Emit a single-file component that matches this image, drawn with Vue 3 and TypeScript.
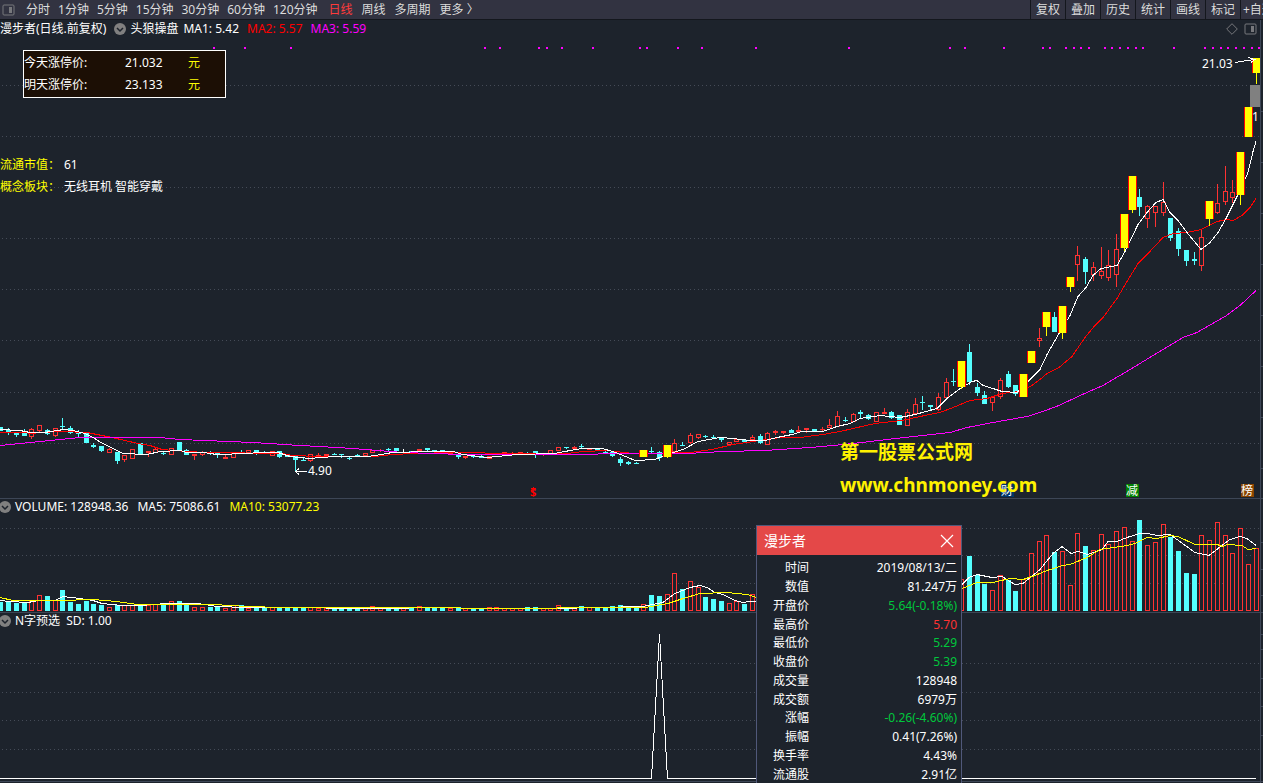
<script setup lang="ts">
import { ref } from 'vue'

type Kind = 'c' | 'r' | 'y' | 'w'
interface Candle { left: number; kind: Kind; high: number; top: number; bottom: number; low: number }
interface Volume { left: number; kind: string; top: number }
interface Row { name: string; value: string; tone: string }

const minutePeriods = ['分时', '1分钟', '5分钟', '15分钟', '30分钟', '60分钟', '120分钟']
const longPeriods = ['日线', '周线', '多周期', '更多 〉']
const tools = ['复权', '叠加', '历史', '统计', '画线', '标记', '+自选']
const active = ref('日线')
const popupOpen = ref(true)

const barLeft = (i: number): number => (i === 0 ? -2 : Math.floor(6.6 + 7.7485 * (i - 1)))

// Each entry: kind high top bottom low
const candleSource = `c 427 427 431 431,c 428 430 432 435,c 432 432 435 437,c 429 432 436 436,r 428 429 437 439,r 425 425 431 432,c 429 430 434 435,r 428 428 436 437,c 418 426 427 429,c 426 428 433 434,
c 430 433 434 437,c 432 433 443 443,c 443 445 447 448,c 446 446 451 452,r 448 449 453 453,c 452 452 461 464,r 455 455 460 462,r 449 449 459 459,c 443 443 454 454,r 451 451 453 457,
r 447 449 453 453,c 451 453 454 455,r 448 448 455 455,c 442 442 450 450,c 449 450 455 455,r 454 454 456 460,r 451 452 455 456,c 451 452 453 455,c 453 453 454 458,r 455 457 459 459,
r 453 453 458 458,c 450 452 453 454,r 450 450 453 453,c 450 450 453 455,c 451 452 453 453,r 451 451 456 456,c 451 451 457 458,c 454 454 457 457,c 456 456 460 472,c 458 460 461 461,
r 454 454 461 462,r 453 455 456 456,r 454 454 456 456,c 453 454 455 455,c 454 454 455 458,c 457 458 459 460,c 454 455 456 456,r 453 453 456 457,r 450 450 453 453,r 449 450 451 452,
c 448 449 450 452,c 448 448 451 453,w 449 452 453 453,c 451 451 453 454,r 449 449 451 451,c 448 448 450 451,c 450 450 452 452,c 450 450 452 452,r 453 453 455 455,c 454 454 457 459,
r 456 456 458 459,c 456 456 457 458,c 454 456 458 458,r 456 456 459 459,r 453 453 454 454,r 452 452 455 455,r 452 453 454 454,r 452 452 453 453,c 452 453 454 454,c 451 451 454 458,
r 454 454 455 456,r 450 450 454 454,r 447 447 451 451,c 447 447 448 449,r 446 447 449 449,c 444 446 447 448,r 449 449 450 450,c 449 449 450 450,c 451 452 453 453,c 452 452 456 457,
c 457 459 463 466,c 461 462 464 465,c 462 463 464 464,y 450 450 457 457,c 447 451 452 454,c 451 452 458 461,y 445 445 457 458,r 439 443 452 452,c 442 445 446 446,r 433 435 443 444,
r 434 434 438 439,c 435 436 437 438,c 435 437 438 439,c 438 438 440 442,r 442 442 445 445,r 438 439 442 442,c 439 440 442 442,r 435 437 440 440,c 434 436 443 444,r 432 433 445 445,
r 430 431 433 435,r 431 431 433 434,c 429 430 433 433,r 426 430 432 432,r 428 428 430 433,c 429 429 431 431,r 427 429 430 431,r 419 425 428 428,r 411 416 427 427,c 417 420 421 422,
r 413 414 422 422,c 410 412 414 418,c 414 415 419 420,r 412 412 422 422,r 408 412 414 414,c 411 412 418 419,c 415 415 425 425,r 409 412 426 426,r 398 404 414 414,c 396 402 403 410,
c 405 405 407 411,r 393 397 410 411,r 378 382 398 400,c 369 381 382 386,y 361 361 387 389,c 344 352 382 385,c 383 387 393 396,c 391 395 404 404,r 396 397 403 411,r 378 380 397 399,
c 371 374 387 388,c 385 385 394 396,y 374 374 397 397,y 351 351 363 363,r 328 338 341 347,y 312 312 327 336,c 312 317 332 332,y 306 306 333 339,y 277 277 287 292,r 246 255 265 281,
c 257 259 272 284,r 262 267 275 281,r 247 271 276 279,r 250 265 278 281,r 234 249 275 287,y 214 214 248 251,y 176 176 210 213,c 189 197 207 216,r 205 206 219 228,r 206 206 213 227,
r 182 202 213 216,c 218 218 238 241,c 228 231 249 256,c 250 250 261 266,c 252 259 261 265,r 230 237 266 271,y 201 201 219 226,r 184 203 213 214,r 166 191 202 205,r 180 192 198 203,
y 152 152 195 205,y 107 107 137 137,y 58 58 73 84`

const candles: Candle[] = candleSource.split(',').map((entry, i) => {
  const [kind, high, top, bottom, low] = entry.trim().split(' ')
  return { left: barLeft(i), kind: kind as Kind, high: +high, top: +top, bottom: +bottom, low: +low }
})

const volumeHead = `c602 c602 c603 c603 r601 r595 c596 r600 c590 c602 c604 c601 c604 c605 r607 c605 r605 r605 c605 r605 r604 c603 r601 c601 c604 r607 r607 c607 c606 r608
r605 c605 r608 c607 c607 r607 c607 c607 c607 c608 r607 r608 r608 c608 c608 c608 c608 r608 r606 r607 c607 c607 r607 c607 r606 c607 c607 c607 r608 c607
r608 c608 c608 r607 r607 r608 r608 r608 c607 c607 r608 r608 r605 c607 r607 c606 r607 c607 c607 c606 c605 c607 c607 r604 c595 c596 r594 r573 c589 r581
r587 c597 c599 c601 r603 r601 c604 r594`
const volumeTail = `r579 c556 c575 c584 r590 r575 c580 c591 r579 r553 r541 r535 c552 r551 r585 r533 c546 r550 r534 r544 r531 r527 r541 c520 r545 r542 r524 c537 c551
c573 c574 r535 r540 r522 r535 r553 r528 r564 r548`
const readVolumes = (source: string, first: number): Volume[] =>
  source.split(/\s+/).map((v, i) => ({ left: barLeft(i + first), kind: v[0], top: +v.slice(1) }))
const volumes = [...readVolumes(volumeHead, 0), ...readVolumes(volumeTail, 124)]

const ma1 = '0,429 20,430 30,432 44,432 58,430 63,429 73,430 85,433 93,437 101,442 113,448 123,453 147,454 160,451 180,450 187,452 203,452 217,454 247,453 260,452 278,452 290,456 310,458 320,457 337,456 347,456 367,456 382,454 392,452 430,451 453,451 463,454 487,457 507,455 517,454 555,453 570,450 582,448 602,448 613,451 623,455 635,460 655,459 667,454 683,449 698,441 720,437 733,438 750,440 765,440 777,437 792,434 802,431 823,431 837,426 850,423 860,418 880,415 900,417 915,414 937,408 947,398 960,388 972,381 977,380 983,385 993,388 1002,391 1017,392 1028,381 1040,369 1047,354 1055,340 1062,328 1070,315 1078,296 1086,287 1093,275 1101,268 1117,265 1125,251 1138,224 1147,212 1156,202 1163,199 1170,212 1178,220 1187,232 1201,249 1210,242 1218,232 1226,218 1237,196 1248,172 1253,151 1256,141'
const ma2 = '0,432 23,432 33,433 38,432 63,431 87,432 112,437 138,443 150,445 162,449 187,451 207,452 282,453 293,455 319,456 353,456 375,456 392,454 415,453 453,452 477,452 493,453 567,453 583,451 607,450 633,453 653,453 690,452 712,449 733,444 753,441 767,439 780,437 800,437 823,434 840,431 853,428 875,423 902,420 920,416 940,412 953,407 970,400 987,398 1002,393 1020,391 1032,385 1040,379 1047,373 1059,367 1072,356 1085,337 1094,326 1103,317 1117,298 1127,281 1138,263 1148,253 1163,237 1173,233 1187,232 1201,229 1217,221 1227,219 1233,220 1242,215 1250,207 1256,198'
const ma3 = '0,445 20,443 50,440 80,437 160,437 180,439 253,442 300,445 319,446 353,448 403,452 463,454 567,454 630,453 687,453 723,451 765,450 810,447 833,445 853,443 887,439 923,435 950,432 967,427 993,422 1027,416 1040,412 1059,405 1080,395 1103,385 1130,369 1163,349 1183,337 1197,332 1225,316 1240,305 1256,290'
const volMa5 = '0,600 10,601 28,602 38,600 55,600 63,596 80,598 93,600 102,603 122,605 140,605 167,603 198,603 217,606 247,607 319,607 332,608 370,608 450,607 470,608 555,608 643,606 663,602 675,593 690,587 700,585 707,587 715,592 723,594 735,600 743,602 750,601 757,601 950,592 962,584 969,577 977,574 992,577 1002,576 1015,584 1023,583 1040,569 1053,553 1062,546 1071,553 1078,551 1088,554 1102,549 1108,541 1117,541 1127,537 1140,533 1148,533 1157,535 1170,534 1177,539 1195,552 1209,555 1218,548 1230,539 1240,536 1247,538 1256,545'
const volMa10 = '0,597 13,600 60,600 93,599 117,601 137,604 213,604 247,606 283,607 450,607 470,608 555,608 560,607 645,607 668,603 683,598 700,593 727,592 747,594 757,597 962,588 977,582 993,582 1010,578 1023,579 1035,575 1047,570 1063,565 1070,564 1087,557 1100,549 1127,545 1135,543 1147,537 1157,538 1170,535 1178,536 1195,544 1217,544 1223,546 1227,544 1242,545 1248,549 1256,548'

const signalDots = [213, 244, 290, 484, 499, 538, 546, 561, 592, 639, 646, 677, 701, 755, 848, 949, 964, 1003, 1042, 1049, 1065, 1073, 1080, 1088, 1104, 1111, 1119, 1127, 1135, 1142, 1173, 1204, 1212, 1220, 1227, 1235, 1243, 1251, 1258]
const priceGrid = [85, 136, 187, 238, 289, 340, 392, 443]
const priceTicks = [111, 162, 213, 264, 315, 366, 417, 468]
const volumeGrid = [528, 555, 583]
const volumeTicks = [542, 569, 595]
const signalGrid = [663, 692, 720, 749]
const signalTicks = [634, 649, 678, 706, 735]

// Marks placed on the price canvas, in chart coordinates
const marks = [
  { text: '21.03', x: 1202, y: 56, tone: 'plain' },
  { text: '4.90', x: 308, y: 463, tone: 'plain' },
  { text: '1', x: 1252, y: 109, tone: 'plain' },
  { text: '财', x: 1001, y: 484, tone: 'navy' },
  { text: '减', x: 1126, y: 484, tone: 'green' },
  { text: '榜', x: 1241, y: 484, tone: 'brown' },
  { text: '$', x: 530, y: 486, tone: 'dollar' },
  { text: '第一股票公式网', x: 840, y: 441, tone: 'brand' },
  { text: 'www.chnmoney.com', x: 840, y: 474, tone: 'brand' },
]
const place = (x: number, y: number) => ({ left: `${(x / 1263) * 100}%`, top: `${((y - 20) / 479) * 100}%` })

const rows: Row[] = [
  { name: '时间', value: '2019/08/13/二', tone: '' },
  { name: '数值', value: '81.247万', tone: '' },
  { name: '开盘价', value: '5.64(-0.18%)', tone: 'down' },
  { name: '最高价', value: '5.70', tone: 'up' },
  { name: '最低价', value: '5.29', tone: 'down' },
  { name: '收盘价', value: '5.39', tone: 'down' },
  { name: '成交量', value: '128948', tone: '' },
  { name: '成交额', value: '6979万', tone: '' },
  { name: '涨幅', value: '-0.26(-4.60%)', tone: 'down' },
  { name: '振幅', value: '0.41(7.26%)', tone: '' },
  { name: '换手率', value: '4.43%', tone: '' },
  { name: '流通股', value: '2.91亿', tone: '' },
]
</script>

<template>
  <div class="app">
    <header class="toolbar">
      <button class="side" aria-label="侧栏">
        <svg width="13" height="12" viewBox="0 0 13 12"><rect x="1" y="1" width="11" height="10" rx="1" fill="none" stroke="#77787c" /><rect x="7" y="3" width="3" height="6" fill="#77787c" /></svg>
      </button>
      <nav class="minutes">
        <button v-for="p in minutePeriods" :key="p" :class="{ on: active === p }" @click="active = p">{{ p }}</button>
      </nav>
      <nav class="longer">
        <button v-for="p in longPeriods" :key="p" :class="{ on: active === p }" @click="active = p">{{ p }}</button>
      </nav>
      <div class="tools">
        <button v-for="t in tools" :key="t">{{ t }}</button>
      </div>
    </header>

    <section class="panel price">
      <svg class="plot" viewBox="0 20 1263 479" preserveAspectRatio="none" shape-rendering="crispEdges">
        <line v-for="y in priceGrid" :key="y" class="grid" x1="2" x2="1263" :y1="y + 0.5" :y2="y + 0.5" />
        <rect v-for="x in signalDots" :key="x" class="signal" :x="x" y="47" width="2" height="2" />
        <g v-for="(k, i) in candles" :key="i" :class="k.kind">
          <template v-if="k.kind !== 'y'">
            <rect class="fill" :x="k.left + 2" :y="k.high" width="1" :height="k.top - k.high" />
            <rect class="fill" :x="k.left + 2" :y="k.bottom" width="1" :height="k.low - k.bottom" />
            <rect v-if="k.kind === 'r' && k.bottom - k.top > 2" class="outline" :x="k.left + 0.5" :y="k.top + 0.5" width="4" :height="k.bottom - k.top - 1" />
            <rect v-else class="fill" :x="k.left" :y="k.top" width="5" :height="k.bottom - k.top" />
          </template>
        </g>
        <polyline class="line red" :points="ma2" transform="translate(0 .5)" />
        <polyline class="line magenta" :points="ma3" transform="translate(0 .5)" />
        <polyline class="line white" :points="ma1" transform="translate(0 .5)" />
        <g v-for="(k, i) in candles" :key="`limit${i}`" class="y">
          <template v-if="k.kind === 'y'">
            <rect class="edge" :x="k.left - 2" :y="k.top" width="9" :height="k.bottom - k.top" />
            <rect class="fill" :x="k.left - 1" :y="k.top" width="7" :height="k.bottom - k.top" />
            <rect class="fill" :x="k.left + 2" :y="k.bottom" width="1" :height="k.low - k.bottom" />
          </template>
        </g>
        <rect class="block" x="1250" y="85" width="10" height="22" />
        <path class="line white" d="M1235 62.5L1254 59.5M1248 57.5L1255 59.5L1251 62.5M295 471.5H307M299 468.5L295.500 471.500L299 474.500" />
        <path class="line red" d="M531 488.500H536M533 486.500V488" />
        <rect class="margin" x="1260" y="20" width="3" height="479" />
        <path class="frame" d="M0 498.500H1263M1260.500 20V499" />
        <line v-for="y in priceTicks" :key="`t${y}`" class="frame" x1="1260" x2="1263" :y1="y + 0.5" :y2="y + 0.5" />
      </svg>
      <span v-for="m in marks" :key="m.text" :class="['mark', m.tone]" :style="place(m.x, m.y)">{{ m.text }}</span>
      <div class="overlay">
        <div class="caption">
          <span class="stock">漫步者(日线.前复权)</span>
          <button class="chevron" aria-label="切换指标">
            <svg width="12" height="12" viewBox="0 0 12 12"><circle cx="6" cy="6" r="6" fill="#808080" /><path d="M3 5L6 8L9 5" fill="none" stroke="#1d232c" stroke-width="1.500" /></svg>
          </button>
          <span class="formula">头狼操盘</span>
          <span class="ma">MA1: 5.42</span>
          <span class="ma text-red">MA2: 5.57</span>
          <span class="ma text-magenta">MA3: 5.59</span>
          <span class="corner">
            <button aria-label="标注"><svg width="12" height="12" viewBox="0 0 12 12"><path d="M6 .700L11.300 6L6 11.300L.700 6Z" fill="none" stroke="#77787c" /></svg></button>
            <button aria-label="右侧栏"><svg width="13" height="12" viewBox="0 0 13 12"><rect x="1" y="1" width="11" height="10" rx="1" fill="none" stroke="#77787c" /><rect x="7" y="3" width="3" height="6" fill="#77787c" /></svg></button>
          </span>
        </div>
        <div class="limits">
          <span>今天涨停价:</span><span>21.032</span><span class="text-yellow">元</span>
          <span>明天涨停价:</span><span>23.133</span><span class="text-yellow">元</span>
        </div>
        <div class="facts">
          <span class="text-yellow">流通市值：</span><span>61</span>
          <span class="text-yellow">概念板块：</span><span>无线耳机 智能穿戴</span>
        </div>
      </div>
    </section>

    <section class="panel volume">
      <svg class="plot" viewBox="0 499 1263 114" preserveAspectRatio="none" shape-rendering="crispEdges">
        <line v-for="y in volumeGrid" :key="y" class="grid" x1="2" x2="1260" :y1="y + 0.5" :y2="y + 0.5" />
        <g v-for="(v, i) in volumes" :key="i" :class="v.kind">
          <rect v-if="v.kind === 'r'" class="outline" :x="v.left + 0.5" :y="v.top + 0.5" width="4" :height="610 - v.top" />
          <rect v-else class="fill" :x="v.left" :y="v.top" width="5" :height="611 - v.top" />
        </g>
        <polyline class="line white" :points="volMa5" transform="translate(0 .5)" />
        <polyline class="line yellow" :points="volMa10" transform="translate(0 .5)" />
        <path class="frame" d="M0 612.500H1263M1260.500 499V613" />
        <line v-for="y in volumeTicks" :key="`t${y}`" class="frame" x1="1260" x2="1263" :y1="y + 0.5" :y2="y + 0.5" />
      </svg>
      <div class="overlay">
        <div class="caption low">
          <button class="chevron" aria-label="切换指标">
            <svg width="12" height="12" viewBox="0 0 12 12"><circle cx="6" cy="6" r="6" fill="#808080" /><path d="M3 5L6 8L9 5" fill="none" stroke="#1d232c" stroke-width="1.500" /></svg>
          </button>
          <span>VOLUME: 128948.36</span><span>MA5: 75086.61</span><span class="text-yellow">MA10: 53077.23</span>
        </div>
      </div>
    </section>

    <section class="panel signal-panel">
      <svg class="plot" viewBox="0 613 1263 170" preserveAspectRatio="none" shape-rendering="crispEdges">
        <line v-for="y in signalGrid" :key="y" class="grid" x1="2" x2="1260" :y1="y + 0.5" :y2="y + 0.5" />
        <polyline class="line white" points="0,778.5 651.5,778.5 659.5,634 667.5,778.5 1256,778.5" />
        <path class="frame" d="M0 781.500H1263M1260.500 613V783" />
        <line v-for="y in signalTicks" :key="`t${y}`" class="frame" x1="1260" x2="1263" :y1="y + 0.5" :y2="y + 0.5" />
      </svg>
      <div class="overlay">
        <div class="caption low">
          <button class="chevron" aria-label="切换指标">
            <svg width="12" height="12" viewBox="0 0 12 12"><circle cx="6" cy="6" r="6" fill="#808080" /><path d="M3 5L6 8L9 5" fill="none" stroke="#1d232c" stroke-width="1.500" /></svg>
          </button>
          <span>N字预选</span><span>SD: 1.00</span>
        </div>
      </div>
    </section>

    <aside v-if="popupOpen" class="popup">
      <div class="title">
        <span>漫步者</span>
        <button aria-label="关闭" @click="popupOpen = false">
          <svg width="14" height="14" viewBox="0 0 14 14"><path d="M1 1L13 13M13 1L1 13" stroke="#fff" stroke-width="1.200" fill="none" /></svg>
        </button>
      </div>
      <table>
        <tbody>
          <tr v-for="r in rows" :key="r.name"><th scope="row">{{ r.name }}</th><td :class="r.tone">{{ r.value }}</td></tr>
        </tbody>
      </table>
    </aside>
  </div>
</template>

<style>
body { margin: 0; background: #1d232c; }
</style>

<style scoped>
.app {
  position: relative;
  display: grid;
  grid-template-rows: 20px minmax(0, 479fr) minmax(0, 114fr) minmax(0, 170fr);
  height: 100vh;
  min-height: 480px;
  overflow: hidden;
  background: #1d232c;
  color: #fff;
  font: 12px/20px "Noto Sans", "Noto Sans CJK SC", sans-serif;
  white-space: nowrap;
}
button { padding: 0; border: 0; background: none; color: inherit; font: inherit; cursor: pointer; }
svg { display: block; }
.toolbar { display: flex; min-width: 0; overflow: hidden; box-sizing: border-box; border-bottom: 1px solid #14171d; background: #323341; color: #dcdcdc; line-height: 19px; }
.side { flex: none; box-sizing: border-box; width: 26px; padding-left: 2px; }
.minutes { display: flex; gap: 8px; }
.longer { display: flex; gap: 9px; margin-left: 11px; }
.on { color: #ff3b3b; }
.tools { display: flex; margin-left: auto; }
.tools button { box-sizing: border-box; width: 35px; border-left: 1px solid #14171d; }
.tools button:last-child { width: 23px; padding-left: 2px; overflow: hidden; text-align: left; }

.panel { position: relative; display: grid; min-width: 0; min-height: 0; overflow: hidden; }
.plot, .overlay { grid-area: 1 / 1; min-width: 0; min-height: 0; }
.plot { width: 100%; height: 100%; }
.caption { display: flex; align-items: center; height: 18px; line-height: 18px; }
.low { gap: 5px; height: 15px; line-height: 15px; }
.chevron { width: 12px; height: 12px; }
.price .chevron { margin: 0 4px 0 8px; }
.low .chevron { margin: 0 -1px 0 -1px; }
.low span + span { margin-left: 1px; }
.volume .low span + span { margin-left: 4px; }
.ma { margin-left: 5px; }
.ma + .ma { margin-left: 8px; }
.corner { display: flex; gap: 6px; margin: 0 6px 0 auto; }
.limits { display: grid; grid-template-columns: 101px 63px 1fr; box-sizing: border-box; width: 203px; margin: 12px 0 0 23px; padding: 1px 0; border: 1px solid #fff; background: #1c0f05; line-height: 22px; }
.facts { display: grid; grid-template-columns: 64px 1fr; margin-top: 56px; line-height: 22px; }
.text-yellow { color: #ff0; }
.text-red { color: #f00; }
.text-magenta { color: #f0f; }

.grid { stroke: #454b57; stroke-dasharray: 1 3; }
.frame { fill: none; stroke: #3d4656; }
.margin { fill: #1d232c; }
.signal { fill: #f0f; }
.block { fill: #808080; }
.c .fill { fill: #54ffff; }
.r .fill { fill: #ff3232; }
.w .fill { fill: #fff; }
.y .fill { fill: #ff0; }
.y .edge { fill: #f00; }
.outline { fill: #1d232c; stroke: #ff3232; }
.line { fill: none; stroke-width: 1; }
.white { stroke: #fff; }
.red { stroke: #f00; }
.magenta { stroke: #f0f; }
.yellow { stroke: #ff0; }

.mark { position: absolute; line-height: 15px; }
.navy, .green, .brown { width: 13px; height: 13px; line-height: 13px; }
.navy { background: #003468; }
.green { background: #008000; }
.brown { background: #8a4500; }
.dollar { color: #f00; font-size: 11px; line-height: 12px; font-weight: bold; }
.brand { color: #fff200; font-size: 19px; font-weight: bold; line-height: 22px; }

.popup { position: absolute; top: 525px; bottom: 0; left: 756px; box-sizing: border-box; width: 206px; overflow: hidden; border: 1px solid #50587a; border-bottom: 0; background: #1d232c; }
.title { display: flex; align-items: center; justify-content: space-between; height: 29px; padding: 0 7px; background: #e44848; font-size: 14px; }
table { width: 100%; height: 225px; margin-top: 4px; border-collapse: collapse; line-height: 18px; }
th, td { padding: 0; font-weight: normal; text-align: right; }
th { width: 52px; }
td { padding-right: 4px; }
.up { color: #ff3232; }
.down { color: #00c83c; }
</style>
